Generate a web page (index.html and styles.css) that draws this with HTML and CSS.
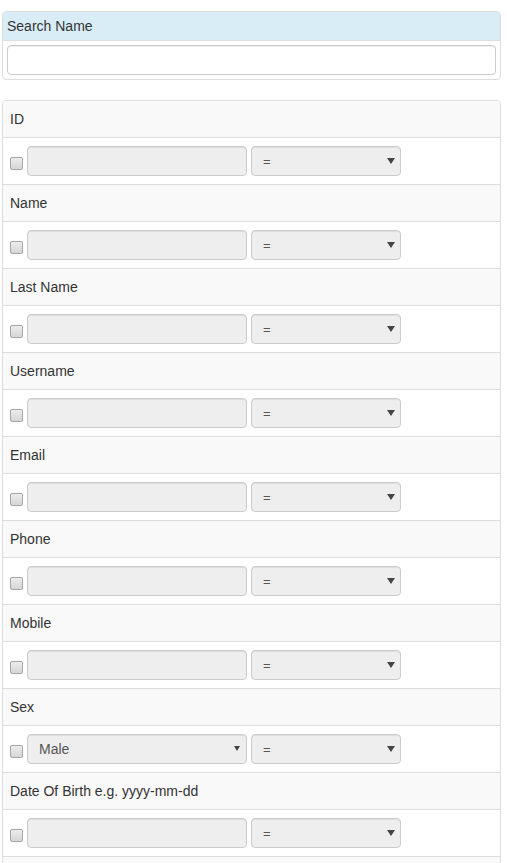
FILE: index.html
```html
<!DOCTYPE html>
<html>
<head>
<meta charset="utf-8">
<link rel="stylesheet" href="styles.css">
</head>
<body>
<div class="page">
  <div class="panel panel-search">
    <div class="panel-heading">Search Name</div>
    <div class="panel-body">
      <input class="text-input" type="text">
    </div>
  </div>

  <div class="panel panel-filters">
    <div class="row head">ID</div>
    <div class="row ctrl">
      <input class="check" type="checkbox">
      <input class="field" type="text" disabled>
      <div class="sel op"><select disabled><option>=</option></select></div>
    </div>

    <div class="row head">Name</div>
    <div class="row ctrl">
      <input class="check" type="checkbox">
      <input class="field" type="text" disabled>
      <div class="sel op"><select disabled><option>=</option></select></div>
    </div>

    <div class="row head">Last Name</div>
    <div class="row ctrl">
      <input class="check" type="checkbox">
      <input class="field" type="text" disabled>
      <div class="sel op"><select disabled><option>=</option></select></div>
    </div>

    <div class="row head">Username</div>
    <div class="row ctrl">
      <input class="check" type="checkbox">
      <input class="field" type="text" disabled>
      <div class="sel op"><select disabled><option>=</option></select></div>
    </div>

    <div class="row head">Email</div>
    <div class="row ctrl">
      <input class="check" type="checkbox">
      <input class="field" type="text" disabled>
      <div class="sel op"><select disabled><option>=</option></select></div>
    </div>

    <div class="row head">Phone</div>
    <div class="row ctrl">
      <input class="check" type="checkbox">
      <input class="field" type="text" disabled>
      <div class="sel op"><select disabled><option>=</option></select></div>
    </div>

    <div class="row head">Mobile</div>
    <div class="row ctrl">
      <input class="check" type="checkbox">
      <input class="field" type="text" disabled>
      <div class="sel op"><select disabled><option>=</option></select></div>
    </div>

    <div class="row head">Sex</div>
    <div class="row ctrl">
      <input class="check" type="checkbox">
      <div class="sel wide"><select disabled><option>Male</option><option>Female</option></select></div>
      <div class="sel op"><select disabled><option>=</option></select></div>
    </div>

    <div class="row head">Date Of Birth e.g. yyyy-mm-dd</div>
    <div class="row ctrl">
      <input class="check" type="checkbox">
      <input class="field" type="text" disabled>
      <div class="sel op"><select disabled><option>=</option></select></div>
    </div>

    <div class="row head"></div>
  </div>
</div>
</body>
</html>
```

FILE: styles.css
```css
* {
  box-sizing: border-box;
}

html, body {
  margin: 0;
  padding: 0;
  background: #fff;
  height: 863px;
  overflow: hidden;
}

body {
  font-family: "Liberation Sans", Arial, sans-serif;
  font-size: 14px;
  line-height: 18px;
  color: #333;
}

.page {
  padding: 11px 0 0 2px;
  width: 501px;
}

.panel {
  border: 1px solid #ddd;
  border-radius: 4px;
  background: #fff;
  width: 499px;
}

.panel-search {
  margin-bottom: 20px;
}

.panel-heading {
  background: #d9edf7;
  border-bottom: 1px solid #ddd;
  border-radius: 3px 3px 0 0;
  padding: 5px 4px;
  height: 29px;
  line-height: 18px;
}

.panel-body {
  padding: 4px;
}

.text-input {
  display: block;
  width: 100%;
  height: 30px;
  margin: 0;
  border: 1px solid #ccc;
  border-radius: 4px;
  background: #fff;
  box-shadow: inset 0 1px 1px rgba(0, 0, 0, 0.075);
  padding: 4px 10px;
  font: inherit;
}

.row {
  border-bottom: 1px solid #ddd;
}

.head {
  background: #f9f9f9;
  height: 37px;
  padding: 8px 7px;
  line-height: 20px;
}

.panel-filters .head:first-child {
  border-radius: 3px 3px 0 0;
}

.ctrl {
  height: 47px;
  padding: 8px 7px;
  display: flex;
  align-items: flex-start;
}

.check {
  -webkit-appearance: none;
  appearance: none;
  width: 13px;
  height: 13px;
  margin: 11px 4px 0 0;
  border: 1px solid #a6a6a6;
  border-radius: 2px;
  background: linear-gradient(#ececec, #d6d6d6);
  flex: none;
}

.field {
  width: 220px;
  height: 30px;
  margin: 0 4px 0 0;
  border: 1px solid #ccc;
  border-radius: 4px;
  background: #eee;
  box-shadow: inset 0 1px 1px rgba(0, 0, 0, 0.075);
  font: inherit;
  flex: none;
}

.sel {
  position: relative;
  height: 30px;
  flex: none;
}

.sel.op {
  width: 150px;
}

.sel.wide {
  width: 220px;
  margin-right: 4px;
}

.sel select {
  -webkit-appearance: none;
  appearance: none;
  width: 100%;
  height: 30px;
  margin: 0;
  border: 1px solid #ccc;
  border-radius: 4px;
  background: #eee;
  box-shadow: inset 0 1px 1px rgba(0, 0, 0, 0.075);
  padding: 0 20px 0 11px;
  font-family: "Liberation Sans", Arial, sans-serif;
  font-size: 14px;
  color: #555;
  opacity: 1;
}

.sel.op select {
  font-size: 13px;
}

.sel::after {
  content: "";
  position: absolute;
  right: 6px;
  top: 12px;
  border-left: 4px solid transparent;
  border-right: 4px solid transparent;
  border-top: 6px solid #444;
  pointer-events: none;
}

.sel.wide::after {
  right: 7px;
  border-left-width: 3px;
  border-right-width: 3px;
  border-top-width: 5px;
}
```
